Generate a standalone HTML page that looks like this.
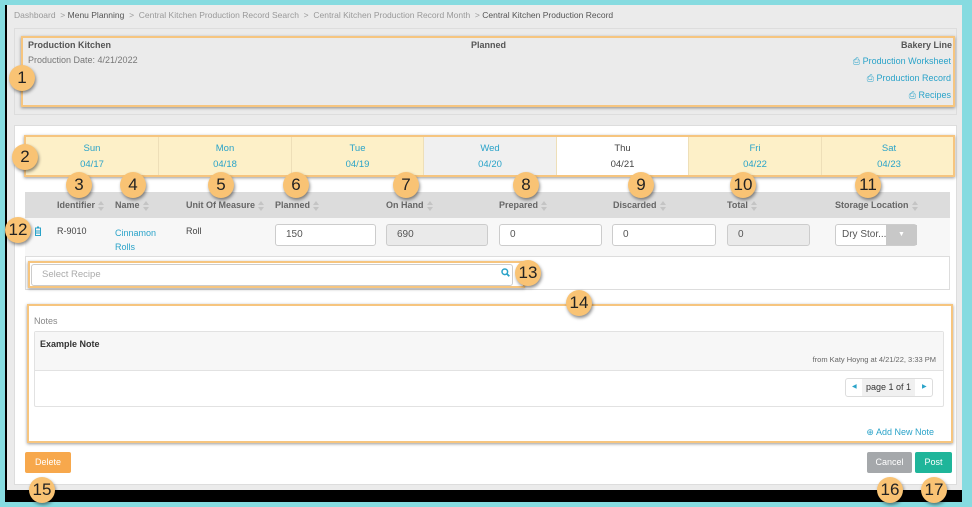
<!DOCTYPE html><html><head><style>
*{box-sizing:border-box;margin:0;padding:0}
body{width:972px;height:507px;background:#86dbe0;font-family:"Liberation Sans",sans-serif;font-size:9px;color:#444;position:relative;overflow:hidden}
.a{position:absolute}
.b{position:absolute;width:26px;height:26px;border-radius:50%;background:#f9c374;box-shadow:1px 2px 3px rgba(0,0,0,.45);font-size:17px;color:#222;text-align:center;line-height:26px}
.blue{color:#2aa3c9}
.hd{font-weight:bold;color:#666}
.arr{display:inline-block;vertical-align:middle;margin-left:3px}
.inp{position:absolute;height:22px;border:1px solid #ccc;border-radius:3px;background:#fff;padding-left:10px;line-height:20px;font-size:10px;color:#555}
.dis{background:#eaeaea}
.day{position:absolute;top:0;height:40px;text-align:center;color:#2aa3c9;font-size:9.5px;line-height:16px;padding-top:4px;border-right:1px solid #eedfb8;background:#fdf0c8}
</style></head><body>
<svg width="0" height="0" style="position:absolute"><defs><symbol id="s" viewBox="0 0 6 10"><path d="M3 0L6 4H0ZM3 10L6 6H0Z" fill="#c4c4c4"/></symbol></defs></svg>
<div class="a" style="left:5px;top:5px;width:957px;height:497px;background:#000"></div>
<div class="a" style="left:7px;top:5px;width:955px;height:485px;background:#ebebeb"></div>
<div class="a" style="left:14px;top:10px;color:#999;font-size:8.5px">Dashboard &nbsp;&gt; <span style="color:#555">Menu Planning</span> &nbsp;&gt; &nbsp;Central Kitchen Production Record Search &nbsp;&gt; &nbsp;Central Kitchen Production Record Month &nbsp;&gt; <span style="color:#555">Central Kitchen Production Record</span></div>
<div class="a" style="left:14px;top:28px;width:943px;height:87px;border:1px solid #ddd;background:#ebebeb"></div>
<div class="a" style="left:21px;top:36px;width:934px;height:71px;border:2px solid #f6c57f;box-shadow:0 1px 3px rgba(0,0,0,.4)"></div>
<div class="a hd" style="left:28px;top:40px;color:#555">Production Kitchen</div>
<div class="a" style="left:28px;top:55px;color:#777">Production Date: 4/21/2022</div>
<div class="a hd" style="left:471px;top:40px;color:#555">Planned</div>
<div class="a hd" style="right:20px;top:40px;color:#555;text-align:right">Bakery Line</div>
<div class="a blue" style="right:21px;top:56px;text-align:right">&#9113; Production Worksheet</div>
<div class="a blue" style="right:21px;top:73px;text-align:right">&#9113; Production Record</div>
<div class="a blue" style="right:21px;top:90px;text-align:right">&#9113; Recipes</div>
<div class="a" style="left:14px;top:125px;width:943px;height:360px;background:#fff;border:1px solid #ddd"></div>
<div class="a" style="left:24px;top:135px;width:931px;height:42px;border:2px solid #f6c57f;box-shadow:0 1px 3px rgba(0,0,0,.4);overflow:hidden">
<div class="day" style="left:0;width:133px">Sun<br>04/17</div>
<div class="day" style="left:133px;width:133px">Mon<br>04/18</div>
<div class="day" style="left:266px;width:132px">Tue<br>04/19</div>
<div class="day" style="left:398px;width:133px;background:#f0f0f0">Wed<br>04/20</div>
<div class="day" style="left:531px;width:132px;background:#fff;color:#444">Thu<br>04/21</div>
<div class="day" style="left:663px;width:133px">Fri<br>04/22</div>
<div class="day" style="left:796px;width:135px">Sat<br>04/23</div>
</div>
<div class="a" style="left:25px;top:192px;width:925px;height:26px;background:#dcdcdc"></div>
<div class="a hd" style="top:200px;left:57px">Identifier<svg class="arr" width="6" height="10"><use href="#s"/></svg></div>
<div class="a hd" style="top:200px;left:115px">Name<svg class="arr" width="6" height="10"><use href="#s"/></svg></div>
<div class="a hd" style="top:200px;left:186px">Unit Of Measure<svg class="arr" width="6" height="10"><use href="#s"/></svg></div>
<div class="a hd" style="top:200px;left:275px">Planned<svg class="arr" width="6" height="10"><use href="#s"/></svg></div>
<div class="a hd" style="top:200px;left:386px">On Hand<svg class="arr" width="6" height="10"><use href="#s"/></svg></div>
<div class="a hd" style="top:200px;left:499px">Prepared<svg class="arr" width="6" height="10"><use href="#s"/></svg></div>
<div class="a hd" style="top:200px;left:613px">Discarded<svg class="arr" width="6" height="10"><use href="#s"/></svg></div>
<div class="a hd" style="top:200px;left:727px">Total<svg class="arr" width="6" height="10"><use href="#s"/></svg></div>
<div class="a hd" style="top:200px;left:835px">Storage Location<svg class="arr" width="6" height="10"><use href="#s"/></svg></div>
<div class="a" style="left:25px;top:218px;width:925px;height:72px;border:1px solid #ddd;border-top:none;background:#fff"></div>
<div class="a" style="left:25px;top:218px;width:925px;height:39px;background:#f7f7f7;border-bottom:1px solid #ddd"></div>
<svg class="a" style="left:34px;top:226px" width="8" height="10" viewBox="0 0 8 10"><path d="M1 2h6M3 1h2M1.5 2.5v7h5v-7M3 4v4M5 4v4" stroke="#2aa3c9" fill="none" stroke-width="1"/></svg>
<div class="a" style="left:57px;top:226px">R-9010</div>
<div class="a blue" style="left:115px;top:226px;line-height:14px">Cinnamon<br>Rolls</div>
<div class="a" style="left:186px;top:226px">Roll</div>
<div class="inp" style="left:275px;top:224px;width:101px">150</div>
<div class="inp dis" style="left:386px;top:224px;width:102px">690</div>
<div class="inp" style="left:499px;top:224px;width:103px">0</div>
<div class="inp" style="left:612px;top:224px;width:104px">0</div>
<div class="inp dis" style="left:727px;top:224px;width:83px">0</div>
<div class="inp" style="left:835px;top:224px;width:82px;padding-left:6px">Dry Stor...</div>
<div class="a" style="left:886px;top:225px;width:31px;height:20px;background:#c8c8c8;color:#fff;text-align:center;line-height:20px;font-size:7px">▼</div>
<div class="a" style="left:28px;top:261px;width:497px;height:27px;border:2px solid #f6c57f;box-shadow:0 1px 3px rgba(0,0,0,.4);background:#fff"></div>
<div class="inp" style="left:31px;top:264px;width:482px;color:#aaa;font-size:9.5px">Select Recipe</div>
<svg class="a" style="left:501px;top:268px" width="9" height="9" viewBox="0 0 9 9"><circle cx="3.8" cy="3.8" r="2.8" stroke="#2aa3c9" stroke-width="1.5" fill="none"/><path d="M5.8 5.8L8.3 8.3" stroke="#2aa3c9" stroke-width="1.8"/></svg>
<div class="a" style="left:27px;top:304px;width:926px;height:139px;border:2px solid #f6c57f;box-shadow:0 1px 3px rgba(0,0,0,.4)"></div>
<div class="a" style="left:34px;top:316px;color:#888">Notes</div>
<div class="a" style="left:34px;top:331px;width:910px;height:76px;border:1px solid #e2e2e2;border-radius:2px;background:#fff"></div>
<div class="a" style="left:35px;top:332px;width:908px;height:39px;background:#f7f7f7;border-bottom:1px solid #e2e2e2"></div>
<div class="a hd" style="left:40px;top:339px;color:#333">Example Note</div>
<div class="a" style="right:36px;top:355px;font-size:7.5px;color:#666">from Katy Hoyng at 4/21/22, 3:33 PM</div>
<div class="a" style="left:845px;top:378px;width:88px;height:19px;border:1px solid #ddd;border-radius:3px;background:#fff;font-size:9px;line-height:17px">
<span class="blue" style="position:absolute;left:6px;font-size:6px">◀</span>
<span style="position:absolute;left:16px;width:53px;height:17px;background:#f0f0f0;text-align:center;color:#333">page 1 of 1</span>
<span class="blue" style="position:absolute;left:76px;font-size:6px">▶</span></div>
<div class="a blue" style="right:38px;top:427px">&#8853; Add New Note</div>
<div class="a" style="left:25px;top:452px;width:46px;height:21px;background:#f7a84c;border-radius:2px;color:#fff;text-align:center;line-height:21px">Delete</div>
<div class="a" style="left:867px;top:452px;width:45px;height:21px;background:#a5a8ab;border-radius:2px;color:#fff;text-align:center;line-height:21px">Cancel</div>
<div class="a" style="left:915px;top:452px;width:37px;height:21px;background:#1fb59a;border-radius:2px;color:#fff;text-align:center;line-height:21px">Post</div>
<div class="b" style="left:9px;top:65px">1</div>
<div class="b" style="left:12px;top:144px">2</div>
<div class="b" style="left:66px;top:172px">3</div>
<div class="b" style="left:120px;top:172px">4</div>
<div class="b" style="left:208px;top:172px">5</div>
<div class="b" style="left:283px;top:172px">6</div>
<div class="b" style="left:393px;top:172px">7</div>
<div class="b" style="left:513px;top:172px">8</div>
<div class="b" style="left:628px;top:172px">9</div>
<div class="b" style="left:730px;top:172px">10</div>
<div class="b" style="left:855px;top:172px">11</div>
<div class="b" style="left:5px;top:217px">12</div>
<div class="b" style="left:515px;top:260px">13</div>
<div class="b" style="left:566px;top:290px">14</div>
<div class="b" style="left:29px;top:477px">15</div>
<div class="b" style="left:877px;top:477px">16</div>
<div class="b" style="left:921px;top:477px">17</div>
</body></html>
